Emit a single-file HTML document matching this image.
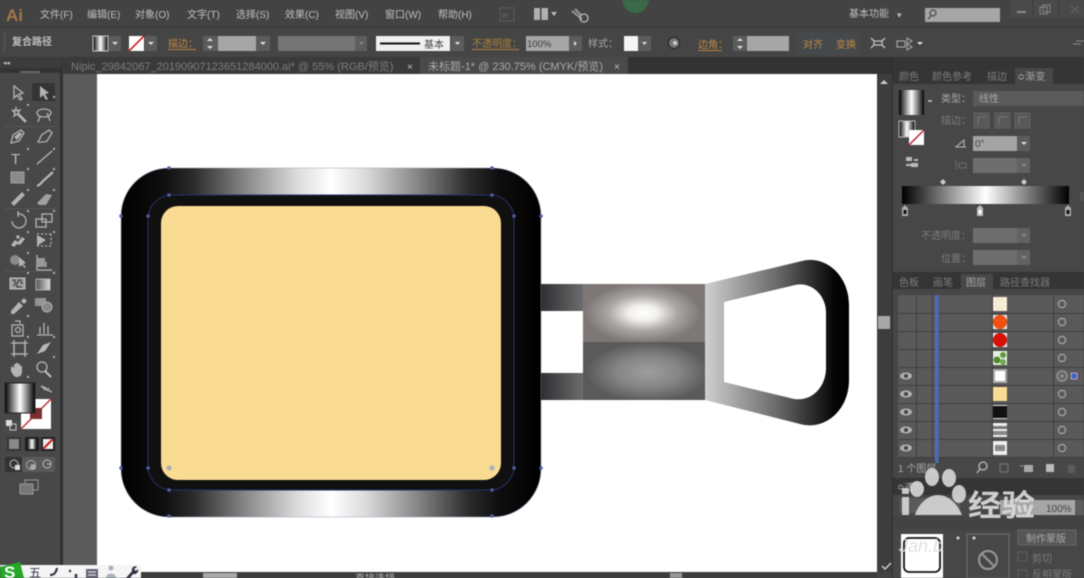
<!DOCTYPE html>
<html><head><meta charset="utf-8"><style>
html,body{margin:0;padding:0;background:#444;width:1084px;height:578px;overflow:hidden}
svg{display:block;position:absolute;left:0;top:0;filter:blur(.55px)}
text{font-family:"Liberation Sans","Noto Sans CJK SC",sans-serif}
.m{font-size:10px;fill:#c0c0c0}
.o{font-size:10px;fill:#c08a44}
.t{font-size:10px;fill:#a8a8a8}
.d{font-size:10px;fill:#7c7c7c}
.i{stroke:#b4b4b4;fill:none;stroke-width:1.3}
.f{fill:#b4b4b4}
</style></head><body>
<svg width="1084" height="578" viewBox="0 0 1084 578">
<defs>
<linearGradient id="pot" x1="121" x2="541" y1="0" y2="0" gradientUnits="userSpaceOnUse">
<stop offset="0" stop-color="#000"/><stop offset=".1" stop-color="#0e0e0e"/><stop offset=".17" stop-color="#2a2a2a"/><stop offset=".3" stop-color="#8a8a8a"/><stop offset=".42" stop-color="#dcdcdc"/><stop offset=".5" stop-color="#fff"/><stop offset=".58" stop-color="#dcdcdc"/><stop offset=".7" stop-color="#8a8a8a"/><stop offset=".83" stop-color="#2a2a2a"/><stop offset=".9" stop-color="#0e0e0e"/><stop offset="1" stop-color="#000"/>
</linearGradient>
<linearGradient id="g" x1="0" x2="1" y1="0" y2="0">
<stop offset="0" stop-color="#000"/><stop offset=".5" stop-color="#fff"/><stop offset="1" stop-color="#000"/>
</linearGradient>
<linearGradient id="arm" x1="0" x2="1" y1="0" y2="0"><stop offset="0" stop-color="#2f2f33"/><stop offset="1" stop-color="#6c6c6c"/></linearGradient>
<linearGradient id="ring" x1="705" x2="849" y1="0" y2="0" gradientUnits="userSpaceOnUse"><stop offset="0" stop-color="#cfcfcf"/><stop offset=".5" stop-color="#6a6a6a"/><stop offset=".9" stop-color="#050505"/><stop offset="1" stop-color="#000"/></linearGradient>
<radialGradient id="hi" cx="643" cy="313" r="1" gradientUnits="userSpaceOnUse" gradientTransform="translate(643 313) scale(58 30) translate(-643 -313)"><stop offset="0" stop-color="#fff"/><stop offset=".25" stop-color="#f2f0ec"/><stop offset=".6" stop-color="#aaa6a2"/><stop offset="1" stop-color="#7d7876"/></radialGradient>
<radialGradient id="lo" cx="648" cy="372" r="1" gradientUnits="userSpaceOnUse" gradientTransform="translate(648 372) scale(62 30) translate(-648 -372)"><stop offset="0" stop-color="#9e9e9e"/><stop offset=".5" stop-color="#868686"/><stop offset="1" stop-color="#5a5a5a"/></radialGradient>
<g id="eye"><ellipse cx="0" cy="0" rx="6" ry="3.6" fill="#b0b0b0"/><circle r="2" fill="#444"/></g>
<g id="cir"><circle r="3.6" fill="none" stroke="#a8a8a8" stroke-width="1.200"/></g>
<linearGradient id="gt"><stop offset="0" stop-color="#555"/><stop offset="1" stop-color="#ddd"/></linearGradient>
</defs>

<!-- base panels -->
<rect width="1084" height="578" fill="#444"/>
<rect x="0" y="0" width="1084" height="28" fill="#434343"/>
<rect x="0" y="27" width="1084" height="1" fill="#383838"/>
<rect x="0" y="28" width="1084" height="29" fill="#454545"/>
<rect x="0" y="57" width="1084" height="17" fill="#333"/>
<rect x="0" y="73" width="62" height="499" fill="#484848"/>
<rect x="0" y="57" width="61" height="11" fill="#3c3c3c"/>
<rect x="60" y="68" width="3" height="504" fill="#303030"/>
<rect x="63" y="74" width="814" height="498" fill="#5b5b5b"/>
<rect x="97" y="74" width="780" height="498" fill="#fff"/>
<rect x="877" y="74" width="15" height="498" fill="#3d3d3d"/>
<rect x="878" y="316" width="12" height="13" fill="#a8a8a8"/>
<path d="M880 84l4-4 4 4z" fill="#ccc"/>
<rect x="892" y="57" width="192" height="521" fill="#303030"/>

<!-- document tabs -->
<rect x="62" y="57" width="358" height="17" fill="#3a3a3a"/>
<rect x="420" y="57" width="208" height="17" fill="#4a4a4a"/>
<text x="71" y="70" style="font-size:11px" fill="#7c7c7c">Nipic_29842067_20190907123651284000.ai* @ 55% (RGB/预览)</text>
<text x="407" y="70" style="font-size:10px" fill="#c0c0c0">×</text>
<text x="428" y="70" style="font-size:11px" fill="#aaa">未标题-1* @ 230.75% (CMYK/预览)</text>
<text x="614" y="70" style="font-size:10px" fill="#c0c0c0">×</text>
<text x="3" y="65" style="font-size:7px" fill="#bbb">◂◂</text>

<!-- artwork -->
<rect x="121" y="168" width="420" height="349" rx="48" fill="url(#pot)" stroke="#9aa0c0" stroke-width=".6"/>
<rect x="148" y="195" width="366" height="295" rx="24" fill="#101010" stroke="#2a3168" stroke-width="1"/>
<rect x="161" y="206" width="340" height="274" rx="17" fill="#f9dc92"/>
<g fill="#5060a0"><circle cx="169" cy="168" r="1.800"/><circle cx="492" cy="168" r="1.800"/><circle cx="121" cy="216" r="1.800"/><circle cx="541" cy="216" r="1.800"/><circle cx="169" cy="195" r="1.800"/><circle cx="492" cy="195" r="1.800"/><circle cx="148" cy="216" r="1.800"/><circle cx="514" cy="216" r="1.800"/><circle cx="121" cy="468" r="1.800"/><circle cx="148" cy="468" r="1.800"/><circle cx="514" cy="468" r="1.800"/><circle cx="541" cy="468" r="1.800"/><circle cx="169" cy="490" r="1.800"/><circle cx="492" cy="490" r="1.800"/><circle cx="169" cy="516" r="1.800"/><circle cx="492" cy="516" r="1.800"/></g>
<circle cx="169" cy="468" r="2.600" fill="#a8b0b8"/><circle cx="492" cy="468" r="2.600" fill="#a8b0b8"/>

<rect x="541" y="284" width="42" height="27" fill="url(#arm)"/>
<rect x="541" y="373" width="42" height="27" fill="url(#arm)"/>
<rect x="583" y="284" width="122" height="58" fill="url(#hi)"/>
<rect x="583" y="342" width="122" height="58" fill="url(#lo)"/>
<path fill-rule="evenodd" fill="url(#ring)" d="M705 284L802 261C825 255 849 275 849 305V380C849 410 825 431 800 424L705 400ZM724 302V382L790 398C810 404 826 388 826 368V312C826 296 812 281 795 285Z"/>

<!-- top menu -->
<text x="6" y="21" style="font-size:17px;font-weight:bold" fill="#a5774a">Ai</text>
<text x="40" y="18" class="m">文件(F)</text><text x="87" y="18" class="m">编辑(E)</text><text x="135" y="18" class="m">对象(O)</text><text x="187" y="18" class="m">文字(T)</text><text x="236" y="18" class="m">选择(S)</text><text x="285" y="18" class="m">效果(C)</text><text x="335" y="18" class="m">视图(V)</text><text x="385" y="18" class="m">窗口(W)</text><text x="438" y="18" class="m">帮助(H)</text>
<rect x="500" y="8" width="14" height="13" fill="none" stroke="#5c5c5c"/><text x="502" y="18" style="font-size:7px" fill="#666">Br</text>
<rect x="534" y="8" width="14" height="12" fill="#b0b0b0"/><rect x="540" y="8" width="1.500" height="12" fill="#444"/><path d="M551 12h6l-3 4z" fill="#bbb"/>
<path d="M572 11l10 8M575 9l6 6" stroke="#999" stroke-width="2"/><circle cx="584" cy="18" r="4" fill="none" stroke="#bbb" stroke-width="1.300"/>
<path d="M622 0h27c-1 8-7 13-13.500 13S623 8 622 0z" fill="#3a6a48"/>
<text x="849" y="17" class="m">基本功能</text><text x="897" y="18" style="font-size:9px" fill="#bbb">▾</text>
<rect x="925" y="8" width="75" height="14" fill="#a6a6a6"/><circle cx="933" cy="13" r="3" fill="none" stroke="#444" stroke-width="1.200"/><path d="M931 16l-3 3" stroke="#444" stroke-width="1.200"/>
<rect x="1010" y="0" width="74" height="18" fill="#4a4a4a"/><rect x="1017" y="11" width="9" height="2" fill="#8a8a8a"/><rect x="1040" y="7" width="7" height="7" fill="none" stroke="#888"/><rect x="1043" y="5" width="7" height="7" fill="none" stroke="#888"/>
<path d="M1033 0v18M1059 0v18" stroke="#3a3a3a"/><path d="M1071 6l8 7m0-7l-8 7" stroke="#666"/>

<!-- options bar -->
<rect x="4" y="33" width="1" height="19" fill="#5a5a5a"/>
<text x="12" y="45" class="m" style="font-weight:bold">复合路径</text>
<rect x="93" y="36" width="15" height="15" fill="url(#g)" stroke="#ccc"/><rect x="109" y="36" width="12" height="15" fill="#5c5c5c"/><path d="M112 42h6l-3 3z" fill="#ddd"/>
<rect x="129" y="36" width="15" height="15" fill="#fff"/><path d="M129 51l15-15" stroke="#d02020" stroke-width="1.600"/><rect x="145" y="36" width="12" height="15" fill="#5c5c5c"/><path d="M148 42h6l-3 3z" fill="#ddd"/>
<text x="168" y="47" class="o">描边：</text><rect x="168" y="49" width="28" height="1" fill="#b8803c"/>
<rect x="203" y="36" width="15" height="15" fill="#5c5c5c"/><path d="M207 41l3-3 3 3zM207 46l3 3 3-3z" fill="#ddd"/>
<rect x="218" y="36" width="38" height="15" fill="#a6a6a6"/><rect x="256" y="36" width="14" height="15" fill="#5c5c5c"/><path d="M260 42h6l-3 3z" fill="#ddd"/>
<rect x="278" y="36" width="77" height="15" fill="#747474"/><rect x="355" y="36" width="12" height="15" fill="#5e5e5e"/><path d="M359 42h5l-2.500 3z" fill="#888"/>
<rect x="376" y="36" width="74" height="15" fill="#f0f0f0"/><rect x="380" y="42.500" width="40" height="2" fill="#111"/><text x="424" y="48" style="font-size:10px" fill="#444">基本</text>
<rect x="451" y="36" width="13" height="15" fill="#5c5c5c"/><path d="M455 42h5l-2.500 3z" fill="#ddd"/>
<text x="472" y="47" class="o" style="fill:#a88038">不透明度：</text><rect x="472" y="49" width="47" height="1" fill="#b8803c"/>
<rect x="526" y="36" width="43" height="15" fill="#a6a6a6"/><text x="527" y="47" style="font-size:9.500px" fill="#3c3c3c">100%</text>
<rect x="569" y="36" width="13" height="15" fill="#5c5c5c"/><path d="M574 41v5l3-2.500z" fill="#ddd"/>
<text x="588" y="47" class="t">样式：</text>
<rect x="624" y="36" width="14" height="15" fill="#f5f5f5"/><rect x="638" y="36" width="13" height="15" fill="#5c5c5c"/><path d="M642 42h5l-2.500 3z" fill="#ddd"/>
<circle cx="674" cy="43" r="5.500" fill="#777" stroke="#222"/><circle cx="675" cy="43" r="2" fill="#ccc"/>
<text x="698" y="48" class="o">边角：</text><rect x="698" y="50" width="24" height="1" fill="#b8803c"/>
<rect x="733" y="36" width="14" height="15" fill="#5c5c5c"/><path d="M737 41l3-3 3 3zM737 46l3 3 3-3z" fill="#ddd"/>
<rect x="747" y="36" width="42" height="15" fill="#a6a6a6"/>
<rect x="796" y="33" width="64" height="22" fill="#46494c"/>
<text x="803" y="48" class="o">对齐</text><text x="836" y="48" class="o">变换</text>
<path d="M871 38l3 3M885 38l-3 3M871 48l3-3M885 48l-3-3M874 41h8v4h-8z" stroke="#c0c0c0" fill="none" stroke-width="1.300"/>
<path d="M897 41h8v6h-8zM907 38l5 3-5 3zM907 44l5 3-5 3z" fill="none" stroke="#b0b0b0"/>
<path d="M917 42h6l-3 3z" fill="#ddd"/>
<path d="M1073 44h8M1076 41h8" stroke="#888"/>

<!-- left toolbar -->
<g>
<rect x="32" y="83" width="23" height="18" fill="#353535"/>
<rect x="20" y="71" width="20" height="2" fill="#666"/>
<path class="i" d="M14 86l0 12 3-3 3 5 2-1-3-5 4-1z"/>
<path class="f" d="M40 86l0 12 3-3 3 5 2-1-3-5 4-1z"/>
<path class="i" d="M12 110l3 1 1-3 1 3 3-1-2 3 8 8-1 1-8-8-3 2 1-3z"/>
<ellipse cx="44" cy="113" rx="7" ry="4" class="i"/><path class="i" d="M40 116l-2 6M47 113l3 8"/>
<path class="i" d="M11 143l2-8 8-5 3 3-5 8z"/><path class="f" d="M14 137l6-5 2 2-5 6z"/>
<path class="i" d="M37 142c4-1 2-6 6-8l6-4 3 3-5 8c-3 2-7 0-8 2"/>
<text x="11" y="164" style="font-size:15px" fill="#b8b8b8">T</text>
<path d="M37 164l15-13" stroke="#b8b8b8" stroke-width="1.300"/>
<rect x="11" y="172" width="13" height="11" fill="#8a8a8a" stroke="#a0a0a0"/>
<path d="M37 186c3-1 4-3 6-5l10-9" stroke="#b8b8b8" stroke-width="2.200" fill="none"/>
<path d="M11 203l11-11 3 3-11 11z" fill="#b0b0b0"/>
<path d="M37 203l9-9 6 1-6 10h-7z" fill="#a0a0a0"/>
<path class="i" d="M12 221a7 7 0 1 0 6-7M18 211v6"/>
<rect x="36" y="219" width="10" height="8" class="i"/><rect x="42" y="214" width="10" height="8" class="i"/>
<path class="f" d="M11 245l4-5 3 2 4-5 3 2-5 6-3-1-3 3zM16 236l3-1 1 3-3 1z"/>
<path class="i" d="M37 234h14M37 246h14M51 234v12" stroke-dasharray="2 2"/><path class="f" d="M37 235l9 5-9 6z"/>
<circle cx="15" cy="260" r="5" fill="#8a8a8a"/><path class="f" d="M19 257v10l3-2 3 3 1-1-3-3 3-1z"/>
<path class="i" d="M37 255v15h15M41 258v9M46 262v5"/><path d="M37 258h8v9h-8z" fill="#999"/>
<rect x="10" y="278" width="15" height="11" fill="#a0a0a0" stroke="#c0c0c0"/><path d="M12 280h3v3h3v-3h3v3h2M13 285h4v2h5" stroke="#333" fill="none"/>
<rect x="36" y="279" width="14" height="11" fill="url(#gt)" stroke="#b0b0b0"/>
<path class="f" d="M11 311l8-9 4 4-9 8h-3zM21 301l3-3 3 3-3 3z"/>
<rect x="35" y="298" width="11" height="8" class="f" opacity=".7"/><circle cx="47" cy="307" r="5" fill="#888" stroke="#b0b0b0"/>
<rect x="12" y="325" width="11" height="11" class="i"/><circle cx="18" cy="330" r="2.500" class="i"/><path class="i" d="M15 321h5v3"/>
<path class="i" d="M37 335h16M40 327v7M44 323v11M48 326v8"/>
<rect x="14" y="343" width="11" height="11" class="i"/><path class="i" d="M11 343h17M11 354h17M14 340v17M25 340v17"/>
<path d="M37 354l6-9 8-3-6 9z" fill="#b8b8b8"/>
<path class="f" d="M11 368c0-3 2-1 3 0v-4h2v-1h2v1h2v2h2v6c0 3-2 5-5 5s-4-2-6-6z"/>
<circle cx="42" cy="367" r="5" class="i" fill="#999"/><path d="M45 371l6 6" stroke="#c0c0c0" stroke-width="2"/>
<g fill="#b0b0b0"><path d="M27 104h2v2h-2zM53 96h2v2h-2zM27 148h2v2h-2zM53 148h2v2h-2zM27 168h2v2h-2zM53 168h2v2h-2zM27 189h2v2h-2zM53 189h2v2h-2zM27 210h2v2h-2zM53 210h2v2h-2zM27 231h2v2h-2zM53 231h2v2h-2zM27 252h2v2h-2zM53 272h2v2h-2zM27 272h2v2h-2zM27 315h2v2h-2zM27 336h2v2h-2zM53 336h2v2h-2zM53 356h2v2h-2zM27 376h2v2h-2z"/></g>
<path d="M4 126.500h52M4 208.500h52M4 271.500h52" stroke="#555"/>

<rect x="21" y="399" width="30" height="30" fill="#fff"/><path d="M21 429l30-30" stroke="#c03030" stroke-width="1.500"/><rect x="30" y="408" width="12" height="11" fill="#7a3030"/>
<rect x="5" y="383" width="30" height="30" fill="url(#g)" stroke="#222"/>
<path d="M41 386l5 2-2 2M52 392l-5-2 2-2M41 386c3 3 7 4 11 6" class="i" stroke-width="1"/>
<rect x="6" y="420" width="6" height="6" fill="#ddd"/><rect x="10" y="424" width="6" height="6" fill="none" stroke="#ccc"/>
<rect x="7" y="437" width="14" height="14" fill="#333"/><rect x="9" y="439" width="10" height="10" fill="#888"/>
<rect x="25" y="437" width="14" height="14" fill="#222"/><rect x="27" y="439" width="10" height="10" fill="url(#g)"/>
<rect x="41" y="437" width="14" height="14" fill="#222"/><rect x="43" y="439" width="10" height="10" fill="#eee"/><path d="M43 449l10-10" stroke="#d02020" stroke-width="2"/>
<rect x="5" y="457" width="17" height="15" fill="#333"/><rect x="22" y="457" width="33" height="15" fill="#5a5a5a"/>
<circle cx="14" cy="464" r="4" fill="none" stroke="#bbb"/><rect x="15" y="465" width="5" height="5" fill="#ddd"/>
<circle cx="31" cy="465" r="4.500" fill="none" stroke="#aaa"/><circle cx="33" cy="467" r="3" fill="#aaa"/>
<circle cx="47" cy="464" r="4" fill="none" stroke="#bbb"/><path d="M47 464h4" stroke="#bbb"/>
<rect x="25" y="480" width="13" height="10" fill="none" stroke="#999"/><rect x="20" y="484" width="13" height="10" fill="#777" stroke="#999"/>
</g>

<!-- gradient panel -->
<rect x="893" y="68" width="191" height="206" fill="#474747"/>
<rect x="893" y="57" width="191" height="27" fill="#353535"/>
<rect x="1015" y="68" width="38" height="16" fill="#474747"/>
<text x="899" y="80" class="d">颜色</text><text x="932" y="80" class="d">颜色参考</text><text x="987" y="80" class="d">描边</text><text x="1017" y="80" class="t">≎渐变</text>
<rect x="899" y="90" width="25" height="25" fill="url(#g)"/>
<path d="M928 101h4" stroke="#ccc" stroke-width="1.500"/>
<text x="941" y="102" class="t">类型：</text>
<rect x="973" y="91" width="111" height="15" fill="#5a5a5a"/><text x="979" y="102" class="t">线性</text>
<text x="941" y="124" class="d">描边：</text>
<rect x="974" y="113" width="15" height="15" fill="#585858" stroke="#626262"/><rect x="995" y="113" width="15" height="15" fill="#585858" stroke="#626262"/><rect x="1015" y="113" width="15" height="15" fill="#585858" stroke="#626262"/>
<path d="M978 125v-8h8M999 125v-8h8M1019 125v-8h8" stroke="#777" fill="none"/>
<rect x="899" y="121" width="16" height="16" fill="url(#g)" stroke="#bbb"/>
<rect x="909" y="130" width="15" height="15" fill="#fff"/><path d="M909 145l15-15" stroke="#c02030" stroke-width="1.500"/>
<rect x="906" y="157" width="6" height="4" fill="#bbb"/><rect x="914" y="159" width="4" height="2" fill="#bbb"/><rect x="906" y="164" width="5" height="2" fill="#bbb"/><rect x="911" y="163" width="7" height="4" fill="#bbb"/>
<path d="M956 147l8-7v7zM956 147h10" fill="none" stroke="#bbb"/>
<rect x="973" y="136" width="44" height="15" fill="#a4a4a4"/><text x="975" y="147" style="font-size:10px" fill="#444">0°</text>
<rect x="1017" y="136" width="13" height="15" fill="#5c5c5c"/><path d="M1021 142h6l-3 3z" fill="#ddd"/>
<rect x="973" y="158" width="44" height="15" fill="#6e6e6e"/><rect x="1017" y="158" width="13" height="15" fill="#626262"/><path d="M1021 164h6l-3 3z" fill="#888"/>
<path d="M956 160v10M959 163h7v5h-7z" stroke="#6c6c6c" fill="none"/>
<path d="M940 182l3-3 3 3-3 3zM1021 182l3-3 3 3-3 3z" fill="#ccc"/>
<rect x="902" y="186" width="167" height="18" fill="url(#g)"/>
<path d="M902 208l3-3 3 3v8h-6z" fill="#aaa"/><rect x="903.500" y="210" width="3" height="4" fill="#111"/>
<path d="M977 208l3-3 3 3v8h-6z" fill="#bbb"/><rect x="978.500" y="210" width="3" height="4" fill="#fff"/>
<path d="M1065 208l3-3 3 3v8h-6z" fill="#aaa"/><rect x="1066.500" y="210" width="3" height="4" fill="#111"/>
<rect x="1080" y="192" width="4" height="9" fill="#555"/>
<text x="921" y="239" class="d">不透明度：</text><rect x="973" y="228" width="44" height="15" fill="#6e6e6e"/><rect x="1017" y="228" width="13" height="15" fill="#626262"/><path d="M1021 234h6l-3 3z" fill="#888"/>
<text x="941" y="262" class="d">位置：</text><rect x="973" y="250" width="44" height="15" fill="#6e6e6e"/><rect x="1017" y="250" width="13" height="15" fill="#626262"/><path d="M1021 256h6l-3 3z" fill="#888"/>

<!-- layers -->
<rect x="893" y="272" width="191" height="206" fill="#474747"/>
<rect x="893" y="272" width="191" height="17" fill="#353535"/>
<rect x="961" y="274" width="32" height="15" fill="#484848"/>
<text x="899" y="286" class="d">色板</text><text x="933" y="286" class="d">画笔</text><text x="966" y="286" class="t">图层</text><text x="1000" y="286" class="d">路径查找器</text>
<rect x="898" y="295" width="186" height="163" fill="#595959"/>
<g stroke="#3f3f3f"><path d="M898 313.500h186M898 331.500h186M898 349.500h186M898 367.500h186M898 385.500h186M898 403.500h186M898 421.500h186M898 439.500h186M898 457.500h186"/><path d="M916.500 295v163M932.500 295v163M992.500 295v163M1053.500 295v163"/></g>
<rect x="935" y="295" width="3.500" height="168" fill="#4c6cc0"/>
<rect x="993" y="297" width="14" height="14" fill="#f7ecd4"/>
<rect x="993" y="315" width="14" height="14" fill="#eee"/><circle cx="1000" cy="322" r="7" fill="#f05010"/>
<rect x="993" y="333" width="14" height="14" fill="#eee"/><circle cx="1000" cy="340" r="7" fill="#d81008"/>
<rect x="993" y="351" width="14" height="14" fill="#e8f0e0"/><circle cx="997" cy="360" r="3.500" fill="#508a30"/><circle cx="1003" cy="355" r="3" fill="#609a40"/><circle cx="1003" cy="362" r="3" fill="#70a848"/>
<rect x="993" y="369" width="14" height="14" fill="#aaa"/><rect x="995" y="371" width="10" height="10" fill="#fff"/>
<rect x="993" y="387" width="14" height="14" fill="#f9dc92"/>
<rect x="993" y="405" width="14" height="14" fill="#111"/><rect x="993" y="405" width="14" height="1" fill="#ddd"/><rect x="993" y="418" width="14" height="1" fill="#ddd"/>
<rect x="993" y="423" width="14" height="14" fill="#eee"/><rect x="993" y="426" width="14" height="3" fill="#777"/><rect x="993" y="431" width="14" height="4" fill="#888"/>
<rect x="993" y="441" width="14" height="14" fill="#eee"/><rect x="995" y="445" width="10" height="6" fill="#888"/>
<use href="#cir" x="1062" y="304"/><use href="#cir" x="1062" y="322"/><use href="#cir" x="1062" y="340"/><use href="#cir" x="1062" y="358"/>
<circle cx="1062" cy="376" r="6" fill="#888"/><circle cx="1062" cy="376" r="3" fill="none" stroke="#444"/>
<rect x="1071" y="373" width="6" height="6" fill="#3f62d0" stroke="#aab"/>
<use href="#cir" x="1062" y="394"/><use href="#cir" x="1062" y="412"/><use href="#cir" x="1062" y="430"/><use href="#cir" x="1062" y="448"/>
<use href="#eye" x="906" y="376"/><use href="#eye" x="906" y="394"/><use href="#eye" x="906" y="412"/><use href="#eye" x="906" y="430"/><use href="#eye" x="906" y="448"/>
<text x="898" y="472" class="t">1 个图层</text>
<circle cx="983" cy="466" r="4" fill="none" stroke="#bbb" stroke-width="1.300"/><path d="M980 469l-3 4" stroke="#bbb" stroke-width="1.300"/>
<rect x="1000" y="464" width="8" height="8" fill="none" stroke="#777"/>
<rect x="1024" y="465" width="9" height="7" fill="#aaa"/><path d="M1020 466h3" stroke="#aaa"/>
<rect x="1046" y="464" width="8" height="8" fill="#bbb"/>
<rect x="1068" y="465" width="7" height="8" fill="#5c5c5c"/>

<!-- transparency panel -->
<rect x="893" y="478" width="191" height="100" fill="#474747"/>
<rect x="893" y="478" width="191" height="17" fill="#353535"/>
<text x="897" y="490" style="font-size:9px" fill="#aaa">≎透明</text>
<rect x="900" y="498" width="60" height="15" fill="#5a5a5a"/>
<rect x="1000" y="500" width="75" height="15" fill="#a6a6a6"/><text x="1046" y="512" style="font-size:10px" fill="#444">100%</text>
<rect x="1075" y="500" width="9" height="15" fill="#5c5c5c"/>
<rect x="893" y="516" width="191" height="14" fill="#434343"/>
<rect x="901" y="534" width="42" height="44" fill="#fff"/>
<rect x="904" y="538" width="36" height="34" rx="5" fill="none" stroke="#111" stroke-width="1.800"/>
<circle cx="958" cy="538" r="1.500" fill="#ddd"/>
<rect x="967" y="534" width="42" height="44" fill="none" stroke="#6c6c6c" stroke-width="1.200"/>
<circle cx="974" cy="538" r="1.500" fill="#ddd"/>
<circle cx="988" cy="560" r="9" fill="none" stroke="#999" stroke-width="2"/><path d="M982 554l12 12" stroke="#999" stroke-width="2"/>
<rect x="1018" y="530" width="58" height="15" fill="#555" stroke="#666"/><text x="1026" y="542" style="font-size:10px" fill="#aaa">制作蒙版</text>
<rect x="1018" y="552" width="9" height="9" fill="none" stroke="#606060"/><text x="1032" y="562" class="d">剪切</text>
<rect x="1018" y="570" width="9" height="9" fill="none" stroke="#606060"/><text x="1032" y="578" class="d">反相蒙版</text>

<!-- watermark -->
<g opacity=".9">
<ellipse cx="932" cy="477" rx="7" ry="9" fill="#d8d8d8"/>
<ellipse cx="949" cy="478" rx="7" ry="9" fill="#d8d8d8"/>
<ellipse cx="917" cy="489" rx="7" ry="8" fill="#d8d8d8"/>
<ellipse cx="959" cy="494" rx="7" ry="9" fill="#d8d8d8"/>
<path d="M915 515c3-10 12-20 23-20s20 10 24 20z" fill="#d8d8d8"/>
<rect x="902" y="497" width="7" height="18" fill="#d8d8d8"/>
<rect x="902" y="488" width="7" height="6" fill="#d8d8d8"/>
<text x="968" y="516" style="font-size:30px;font-weight:bold" fill="#dedede" textLength="67" lengthAdjust="spacingAndGlyphs" transform="translate(0,0)">经验</text>
<text x="899" y="552" style="font-size:18px;font-style:italic" fill="#ddd">Jan.b</text>
</g>
<path d="M882 566l3 3 6-6" stroke="#ccc" fill="none" stroke-width="1.500"/>

<!-- status bar -->
<rect x="63" y="572" width="814" height="6" fill="#3d3d3d"/>
<rect x="203" y="573" width="34" height="5" fill="#aaa"/>
<text x="355" y="582" style="font-size:10px" fill="#bbb">直接选择</text>
<rect x="670" y="573" width="12" height="5" fill="#999"/>

<!-- IME -->
<rect x="0" y="565" width="141" height="13" fill="#f5f5f5"/>
<path d="M0 567L20 562L24 578H0Z" fill="#25a828"/>
<text x="4" y="578" style="font-size:17px;font-weight:bold" fill="#fff">S</text>
<text x="29" y="577" style="font-size:12px" fill="#334">五</text>
<path d="M50 575c4 0 6-2 7-7" stroke="#334" stroke-width="2.200" fill="none"/>
<path d="M69 571h2M76 574v4" stroke="#334" stroke-width="2.500"/>
<rect x="86" y="569" width="12" height="9" fill="#667"/><path d="M88 572h8M88 575h8" stroke="#eee"/>
<circle cx="111" cy="568" r="2.500" fill="#a8b4b8"/><path d="M106 578c0-6 10-6 10 0z" fill="#a8b4b8"/>
<path d="M126 578l6-7c-1-4 3-6 5-4l-3 2 2 2 2-2c1 3-2 6-5 5l-3 4z" fill="#334"/>
</svg>
</body></html>
